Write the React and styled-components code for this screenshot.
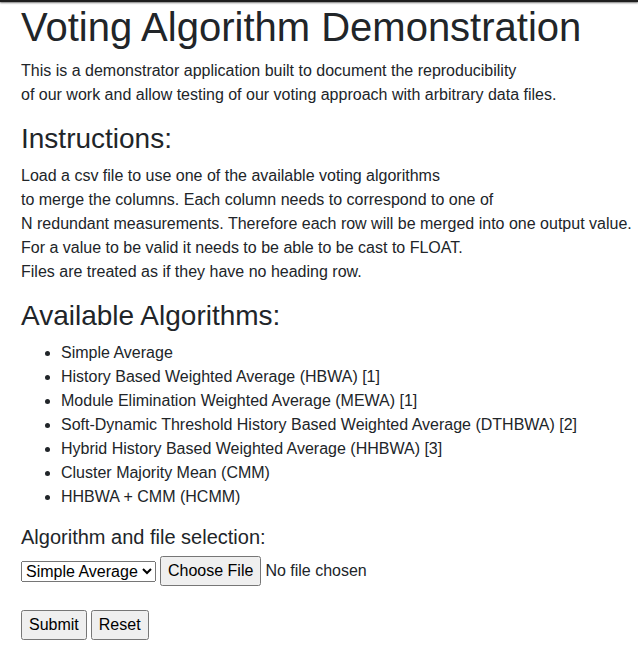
import React from 'react';
import styled, { createGlobalStyle } from 'styled-components';

const GlobalStyle = createGlobalStyle`
  body {
    margin: 0;
    font-family: "Liberation Sans", Arial, sans-serif;
    font-size: 16px;
    line-height: 1.5;
    color: #212529;
    background: #fff;
  }
`;

const TopBar = styled.div`
  height: 2px;
  background: #1f1f1f;
  box-shadow: 0 1px 2px rgba(0, 0, 0, 0.55);
`;

const Container = styled.main`
  padding: 1px 0 0 21px;
`;

const Title = styled.h1`
  margin: 0 0 8px;
  font-size: 40px;
  font-weight: 400;
  line-height: 1.2;
`;

const Heading = styled.h2`
  margin: 0 0 ${p => p.$mb ?? 8}px;
  font-size: ${p => (p.$small ? 20 : 28)}px;
  font-weight: 400;
  line-height: 1.2;
`;

const Text = styled.p`
  margin: 0 0 15px;
`;

const AlgoList = styled.ul`
  margin: 0 0 16px;
  padding-left: 40px;
`;

const FieldRow = styled.div`
  display: flex;
  align-items: center;
  gap: 4px;
  margin-bottom: 24px;
`;

const Select = styled.select`
  margin: 0;
  font-family: inherit;
  font-size: 16px;
  color: #000;
`;

const FileInput = styled.input`
  margin: 0;
  height: 30px;
  font-family: inherit;
  font-size: 16px;
  line-height: 24px;

  &::file-selector-button {
    box-sizing: border-box;
    height: 30px;
    font-family: inherit;
    font-size: 16px;
    line-height: 24px;
    padding: 1px 6px;
    margin-right: 4px;
  }
`;

const ButtonRow = styled.div`
  display: flex;
  gap: 4px;
`;

const Button = styled.button`
  box-sizing: border-box;
  height: 30px;
  margin: 0;
  font-family: inherit;
  font-size: 16px;
  line-height: 24px;
  padding: 1px 6px;
`;

const algorithms = [
  'Simple Average',
  'History Based Weighted Average (HBWA) [1]',
  'Module Elimination Weighted Average (MEWA) [1]',
  'Soft-Dynamic Threshold History Based Weighted Average (DTHBWA) [2]',
  'Hybrid History Based Weighted Average (HHBWA) [3]',
  'Cluster Majority Mean (CMM)',
  'HHBWA + CMM (HCMM)',
];

const App = () => (
  <>
    <GlobalStyle />
    <TopBar />
    <Container>
      <Title>Voting Algorithm Demonstration</Title>
      <Text>
        This is a demonstrator application built to document the reproducibility
        <br />
        of our work and allow testing of our voting approach with arbitrary data files.
      </Text>

      <Heading>Instructions:</Heading>
      <Text>
        Load a csv file to use one of the available voting algorithms
        <br />
        to merge the columns. Each column needs to correspond to one of
        <br />
        N redundant measurements. Therefore each row will be merged into one output value.
        <br />
        For a value to be valid it needs to be able to be cast to FLOAT.
        <br />
        Files are treated as if they have no heading row.
      </Text>

      <Heading $mb={9}>Available Algorithms:</Heading>
      <AlgoList>
        {algorithms.map(a => (
          <li key={a}>{a}</li>
        ))}
      </AlgoList>

      <form onSubmit={e => e.preventDefault()}>
        <Heading $small $mb={7}>Algorithm and file selection:</Heading>
        <FieldRow>
          <Select defaultValue="Simple Average">
            <option>Simple Average</option>
            <option>HBWA</option>
            <option>MEWA</option>
            <option>DTHBWA</option>
            <option>HHBWA</option>
            <option>CMM</option>
            <option>HCMM</option>
          </Select>
          <FileInput type="file" accept=".csv" />
        </FieldRow>
        <ButtonRow>
          <Button type="submit">Submit</Button>
          <Button type="reset">Reset</Button>
        </ButtonRow>
      </form>
    </Container>
  </>
);

export default App;
